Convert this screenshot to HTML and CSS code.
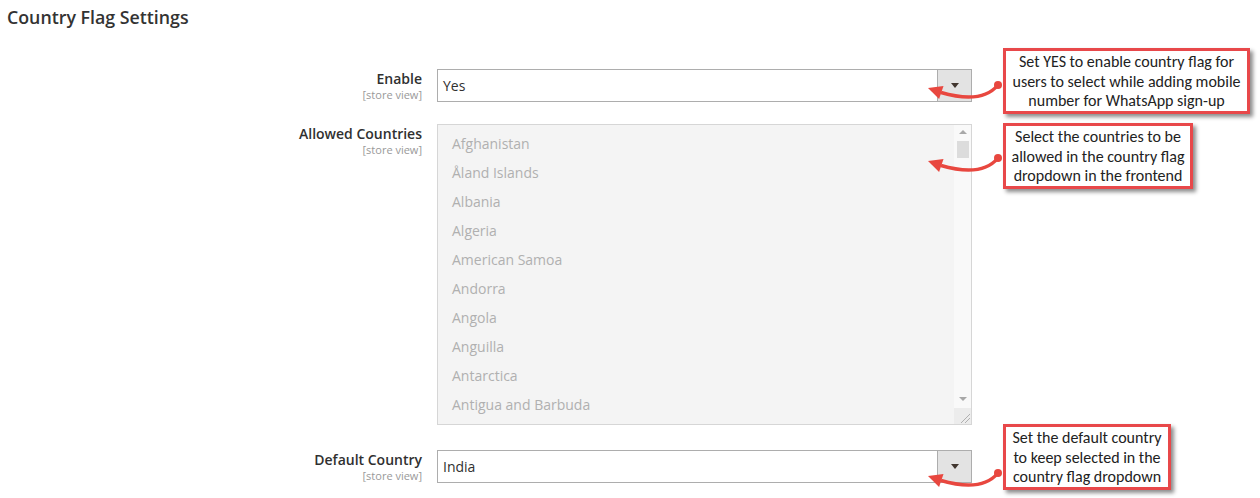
FILE: index.html
```html
<!DOCTYPE html>
<html>
<head>
<meta charset="utf-8">
<link rel="stylesheet" href="styles.css">
</head>
<body>
<div class="page">
  <h2 class="title">Country Flag Settings</h2>

  <div class="row row-enable">
    <div class="label"><span class="name">Enable</span><span class="scope">[store view]</span></div>
    <div class="control">
      <div class="select"><span class="value">Yes</span><span class="btn"><i class="tri"></i></span></div>
    </div>
    <div class="note note-1">Set YES to enable country flag for users to select while adding mobile number for WhatsApp sign-up</div>
    <svg class="arrow arrow-1" width="90" height="32" viewBox="0 0 90 32"><path d="M78 10 C68 22 50 26 21 17.5" /><polygon points="8,13 23.5,10.9 19.1,24.1" /><circle cx="78" cy="10" r="4" /></svg>
  </div>

  <div class="row row-countries">
    <div class="label"><span class="name">Allowed Countries</span><span class="scope">[store view]</span></div>
    <div class="control">
      <div class="multi">
        <ul class="options">
          <li>Afghanistan</li>
          <li>Åland Islands</li>
          <li>Albania</li>
          <li>Algeria</li>
          <li>American Samoa</li>
          <li>Andorra</li>
          <li>Angola</li>
          <li>Anguilla</li>
          <li>Antarctica</li>
          <li>Antigua and Barbuda</li>
        </ul>
        <div class="scrollbar">
          <i class="sb-up"></i>
          <i class="sb-thumb"></i>
          <span class="sb-fill"></span>
          <i class="sb-down"></i>
          <span class="sb-corner"><svg width="16" height="16" viewBox="0 0 16 16"><path d="M6 15 L15 6 M10 15 L15 10" /></svg></span>
        </div>
      </div>
    </div>
    <div class="note note-2">Select the countries to be allowed in the country flag dropdown in the frontend</div>
    <svg class="arrow arrow-2" width="90" height="32" viewBox="0 0 90 32"><path d="M78 10 C68 22 50 26 21 17.5" /><polygon points="8,13 23.5,10.9 19.1,24.1" /><circle cx="78" cy="10" r="4" /></svg>
  </div>

  <div class="row row-default">
    <div class="label"><span class="name">Default Country</span><span class="scope">[store view]</span></div>
    <div class="control">
      <div class="select"><span class="value">India</span><span class="btn"><i class="tri"></i></span></div>
    </div>
    <div class="note note-3">Set the default country to keep selected in the country flag dropdown</div>
    <svg class="arrow arrow-3" width="90" height="32" viewBox="0 0 90 32"><path d="M78 10 C68 22 50 26 21 17.5" /><polygon points="8,13 23.5,10.9 19.1,24.1" /><circle cx="78" cy="10" r="4" /></svg>
  </div>
</div>
</body>
</html>
```
FILE: styles.css
```css
html, body {
  margin: 0;
  padding: 0;
  background: #ffffff;
}
body {
  font-family: "Open Sans", "Liberation Sans", sans-serif;
  color: #303030;
  width: 1260px;
  height: 498px;
  overflow: hidden;
}
.page {
  display: flex;
  flex-direction: column;
}
.title {
  margin: 6px 0 0 7px;
  font-size: 17.8px;
  line-height: 22px;
  font-weight: 600;
  color: #333333;
}
.row {
  position: relative;
  display: grid;
  grid-template-columns: 422px 535px;
  column-gap: 15px;
}
.row-enable { margin-top: 41px; }
.row-countries { margin-top: 22px; }
.row-default { margin-top: 25px; }

.label {
  display: flex;
  flex-direction: column;
  align-items: flex-end;
  text-align: right;
  padding-top: 1px;
}
.label .name {
  font-size: 14px;
  line-height: 18px;
  font-weight: 600;
  color: #303030;
}
.label .scope {
  font-size: 11px;
  line-height: 14px;
  color: #999999;
}

.select {
  box-sizing: border-box;
  height: 33px;
  border: 1px solid #adadad;
  display: flex;
  align-items: stretch;
  background: #fff;
}
.select .value {
  flex: 1;
  padding-left: 5px;
  font-size: 14px;
  line-height: 31px;
  color: #303030;
}
.select .btn {
  width: 33px;
  border-left: 1px solid #adadad;
  background: #e3e3e3;
  display: flex;
  align-items: center;
  justify-content: center;
}
.tri {
  width: 0;
  height: 0;
  border-left: 4px solid transparent;
  border-right: 4px solid transparent;
  border-top: 5px solid #41362f;
}

.multi {
  box-sizing: border-box;
  height: 301px;
  border: 1px solid #d6d6d6;
  background: #f4f4f4;
  display: flex;
  overflow: hidden;
}
.options {
  flex: 1;
  list-style: none;
  margin: 0;
  padding: 4px 0 0 14px;
}
.options li {
  font-size: 14px;
  line-height: 29px;
  height: 29px;
  color: #b0b0b0;
  white-space: nowrap;
}
.scrollbar {
  width: 17px;
  background: #f9f9f9;
  display: flex;
  flex-direction: column;
  align-items: center;
}
.sb-up {
  margin-top: 5px;
  width: 0;
  height: 0;
  border-left: 4px solid transparent;
  border-right: 4px solid transparent;
  border-bottom: 4px solid #a8a8a8;
}
.sb-thumb {
  margin-top: 7px;
  width: 12px;
  height: 17px;
  background: #dcdcdc;
}
.sb-fill { flex: 1; }
.sb-down {
  margin-bottom: 7px;
  width: 0;
  height: 0;
  border-left: 4px solid transparent;
  border-right: 4px solid transparent;
  border-top: 4px solid #a8a8a8;
}
.sb-corner {
  width: 17px;
  height: 16px;
  background: #ececec;
  display: flex;
  justify-content: flex-end;
}
.sb-corner path {
  stroke: #b0b0b0;
  stroke-width: 1;
  fill: none;
}

.note {
  position: absolute;
  left: 1003px;
  box-sizing: border-box;
  height: 66px;
  border: 3px solid #e8484a;
  background: #ffffff;
  box-shadow: 3px 3px 4px rgba(0, 0, 0, 0.45);
  font-family: "Carlito", "Lato", sans-serif;
  font-size: 16px;
  line-height: 19.5px;
  color: #222222;
  text-align: center;
  padding: 1px 3px 0;
}
.note-1 { top: -21px; width: 247px; }
.note-2 { top: -1px; width: 190px; }
.note-3 { top: -26px; width: 168px; }

.arrow {
  position: absolute;
  left: 920px;
  overflow: visible;
}
.arrow path {
  fill: none;
  stroke: #e8473f;
  stroke-width: 3.5;
}
.arrow polygon, .arrow circle {
  fill: #e8473f;
}
.arrow-1 { top: 6px; }
.arrow-2 { top: 24px; }
.arrow-3 { top: 13px; }
```
